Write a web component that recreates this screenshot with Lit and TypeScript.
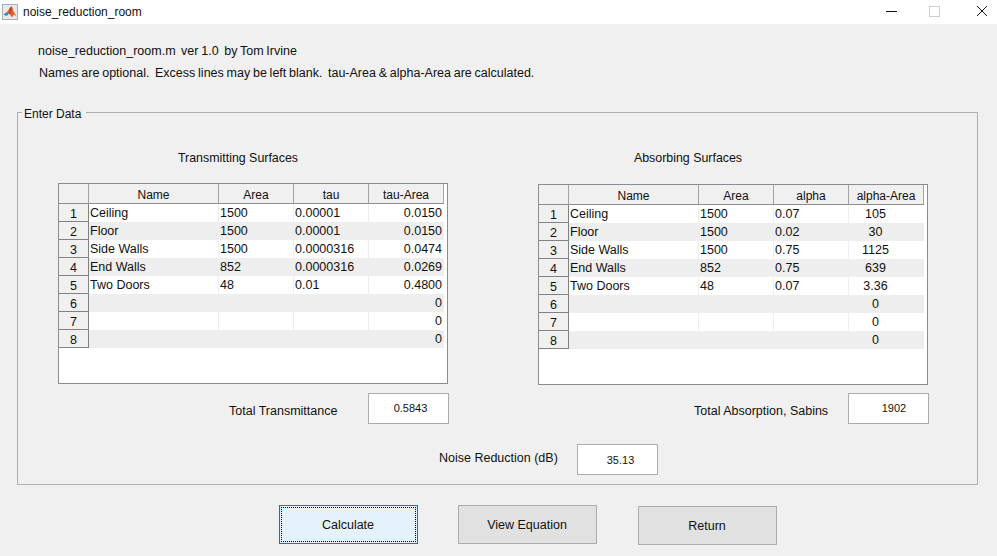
import { LitElement, html, css, svg } from "lit";
import { customElement } from "lit/decorators.js";

type Row = [string, string, string, string];

const TX: Row[] = [
  ["Ceiling", "1500", "0.00001", "0.0150"],
  ["Floor", "1500", "0.00001", "0.0150"],
  ["Side Walls", "1500", "0.0000316", "0.0474"],
  ["End Walls", "852", "0.0000316", "0.0269"],
  ["Two Doors", "48", "0.01", "0.4800"],
  ["", "", "", "0"],
  ["", "", "", "0"],
  ["", "", "", "0"],
];
const AB: Row[] = [
  ["Ceiling", "1500", "0.07", "105"],
  ["Floor", "1500", "0.02", "30"],
  ["Side Walls", "1500", "0.75", "1125"],
  ["End Walls", "852", "0.75", "639"],
  ["Two Doors", "48", "0.07", "3.36"],
  ["", "", "", "0"],
  ["", "", "", "0"],
  ["", "", "", "0"],
];

const logo = svg`<svg class="logo" width="16" height="16" viewBox="0 0 16 16">
  <rect x="0.5" y="0.5" width="15" height="15" fill="#e6e9ee" stroke="#a9adb5"/>
  <path d="M1.5 10.5 L5 8 L7 9.5 L4.5 12 Z" fill="#3f7fbf"/>
  <path d="M5 8 L8 3.5 L10 2.5 L11.5 7 L14.5 12.5 L12 10.5 L10 13.5 L8 10.5 L7 9.5 Z" fill="#e2622a"/>
  <path d="M8 3.5 L10 2.5 L9.5 6 L8 10.5 L7 9.5 Z" fill="#b8401c"/>
</svg>`;

@customElement("app-root")
export class AppRoot extends LitElement {
  static styles = css`
    :host {
      display: block;
      width: 997px;
      height: 556px;
      overflow: hidden;
      background: #f0f0f0;
      color: #111;
      font-family: "Liberation Sans", Arial, sans-serif;
      font-size: 12.5px;
      line-height: 16px;
    }
    .titlebar {
      height: 24px;
      background: #fff;
      display: flex;
      align-items: center;
      padding-left: 2px;
    }
    .logo { flex: none; margin-right: 5px; }
    .wintitle { flex: 1; font-size: 12px; }
    .winbtns { display: flex; }
    .winbtns svg { display: block; }
    .intro {
      padding: 19px 0 0 38px;
      height: 69px;
      box-sizing: border-box;
      font-size: 12.5px;
      word-spacing: -0.7px;
    }
    .intro div { height: 22px; }
    .intro .l2 { padding-left: 1px; }
    .panel {
      position: relative;
      box-sizing: border-box;
      width: 961px;
      height: 373px;
      margin-left: 17px;
      margin-top: 19px;
      border: 1px solid #b0b0b0;
      padding: 37px 0 0 40px;
    }
    .legend {
      position: absolute;
      left: 4px;
      top: -7px;
      padding: 0 5px 0 2px;
      background: #f0f0f0;
      font-size: 12px;
    }
    .columns { display: grid; grid-template-columns: 480px 391px; }
    .col h2 {
      margin: 0;
      font: inherit;
      font-size: 12.4px;
      height: 33px;
      text-align: center;
    }
    .col.tx h2 { width: 360px; }
    .col.ab h2 { width: 300px; }
    .col.ab .table { margin-top: 1px; }
    .table {
      box-sizing: border-box;
      width: 390px;
      height: 201px;
      border: 1px solid #8b8d92;
      background: #fff;
      font-size: 12.5px;
      line-height: 19px;
    }
    .row {
      display: grid;
      grid-template-columns: 30px 130px 75px 75px 75px;
      grid-template-rows: 18px;
      width: 385px;
      height: 18px;
    }
    .row.odd { background: #fff; }
    .row.even { background: #eeeeee; }
    .row.head { height: 20px; grid-template-rows: 20px; background: #f0f0f0; }
    .hc {
      box-sizing: border-box;
      background: #f0f0f0;
      border-right: 1px solid #a4a4a6;
      border-bottom: 1px solid #8b8d92;
      text-align: center;
      font-size: 12px;
      line-height: 22px;
    }
    .rn {
      box-sizing: border-box;
      background: #f0f0f0;
      border-right: 1px solid #808286;
      border-bottom: 1px solid #808286;
      text-align: center;
      font-size: 12.5px;
      line-height: 20px;
    }
    .c {
      box-sizing: border-box;
      padding: 0 1px;
      border-right: 1px solid #eeeeee;
      white-space: nowrap;
      overflow: hidden;
    }
    .c.r { text-align: right; padding-right: 2px; border-right: none; }
    .c.m { text-align: center; padding-right: 23px; border-right: none; }
    .total {
      display: flex;
      align-items: flex-start;
      margin-top: 9px;
    }
    .tx .total { padding-left: 171px; }
    .ab .total { padding-left: 156px; }
    .col.ab .total { margin-top: 8px; }
    .total span { position: relative; top: 10px; }
    .tx .total span { width: 139px; }
    .ab .total span { width: 154px; }
    .val {
      box-sizing: border-box;
      width: 81px;
      height: 31px;
      border: 1px solid #acacac;
      background: #fff;
      text-align: center;
      font-size: 11px;
      line-height: 29px;
    }
    .tx .val { padding-left: 4px; }
    .ab .val { padding-left: 11px; }
    .noise {
      display: flex;
      align-items: flex-start;
      margin: 20px 0 0 381px;
    }
    .noise span { width: 138px; padding-top: 6px; }
    .noise .val { line-height: 31px; padding-left: 6px; }
    .buttons {
      display: flex;
      align-items: flex-start;
      gap: 40px;
      margin: 20px 0 0 279px;
    }
    .btn {
      box-sizing: border-box;
      width: 139px;
      height: 39px;
      border: 1px solid #adadad;
      background: #e1e1e1;
      color: #111;
      font: inherit;
      padding: 0 1px 0 0;
    }
    .btn.focus {
      border: 1px solid #0078d7;
      background: #e5f1fb;
      outline: 1px dotted #000;
      outline-offset: -3px;
    }
    .btn.ret { margin: 1px 0 0 1px; }
  `;

  private table(cols: string[], rows: Row[], center: boolean) {
    return html`<div class="table">
      <div class="row head">
        <div class="hc"></div>
        ${cols.map((c) => html`<div class="hc">${c}</div>`)}
      </div>
      ${rows.map(
        (r, i) => html`<div class="row ${i % 2 ? "even" : "odd"}">
          <div class="rn">${i + 1}</div>
          <div class="c">${r[0]}</div>
          <div class="c">${r[1]}</div>
          <div class="c">${r[2]}</div>
          <div class="c ${center ? "m" : "r"}">${r[3]}</div>
        </div>`
      )}
    </div>`;
  }

  render() {
    return html`
      <div class="titlebar">
        ${logo}
        <div class="wintitle">noise_reduction_room</div>
        <div class="winbtns">
          <svg width="114" height="24" viewBox="0 0 114 24">
            <path d="M3 11.5 H14" stroke="#111" fill="none"/>
            <rect x="46.5" y="6.5" width="10" height="10" fill="none" stroke="#cfcfcf"/>
            <path d="M94 6 L104 16 M104 6 L94 16" stroke="#111" fill="none"/>
          </svg>
        </div>
      </div>
      <div class="intro">
        <div>noise_reduction_room.m&nbsp; ver 1.0&nbsp; by Tom Irvine</div>
        <div class="l2">Names are optional.&nbsp; Excess lines may be left blank.&nbsp; tau-Area &amp; alpha-Area are calculated.</div>
      </div>
      <div class="panel">
        <div class="legend">Enter Data</div>
        <div class="columns">
          <div class="col tx">
            <h2>Transmitting Surfaces</h2>
            ${this.table(["Name", "Area", "tau", "tau-Area"], TX, false)}
            <div class="total"><span>Total Transmittance</span><div class="val">0.5843</div></div>
          </div>
          <div class="col ab">
            <h2>Absorbing Surfaces</h2>
            ${this.table(["Name", "Area", "alpha", "alpha-Area"], AB, true)}
            <div class="total"><span>Total Absorption, Sabins</span><div class="val">1902</div></div>
          </div>
        </div>
        <div class="noise"><span>Noise Reduction (dB)</span><div class="val">35.13</div></div>
      </div>
      <div class="buttons">
        <button class="btn focus">Calculate</button>
        <button class="btn">View Equation</button>
        <button class="btn ret">Return</button>
      </div>
    `;
  }
}
